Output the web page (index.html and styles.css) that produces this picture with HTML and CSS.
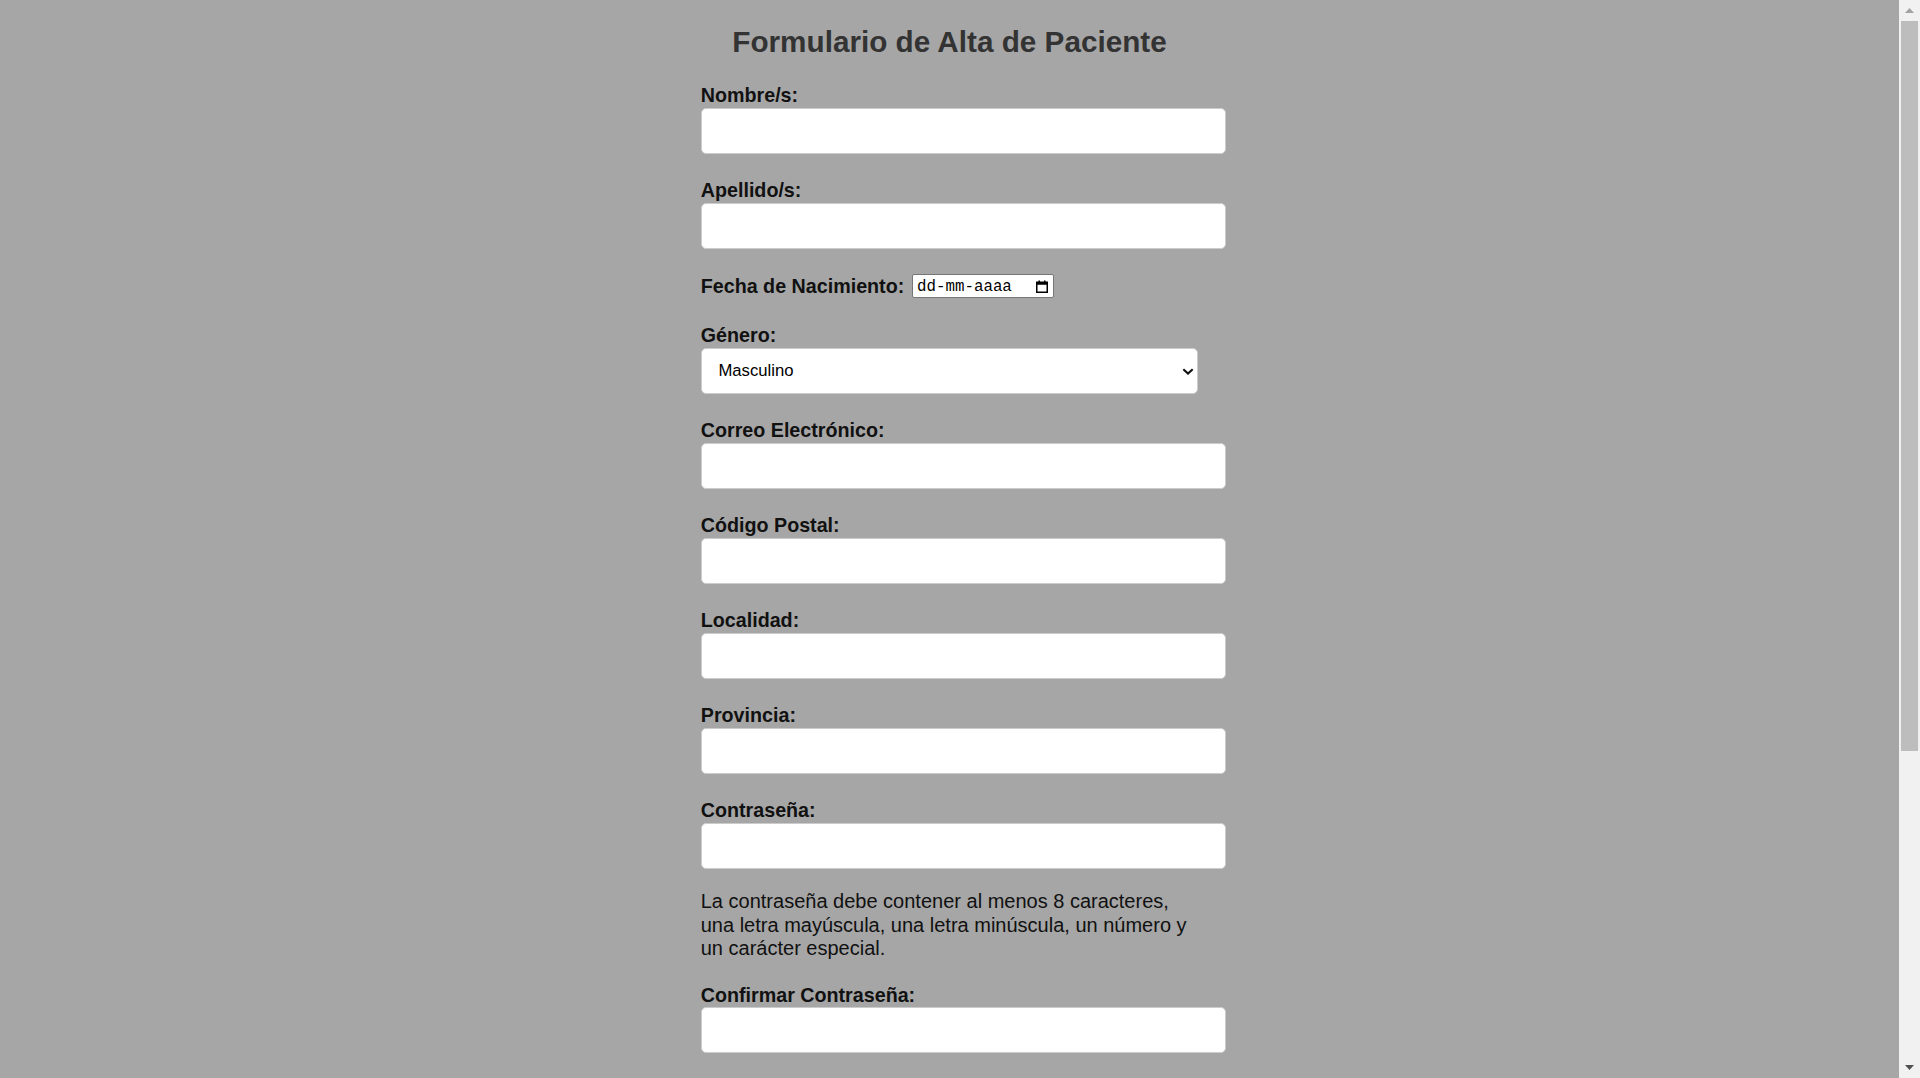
FILE: index.html
```html
<!DOCTYPE html>
<html lang="es">
<head>
<meta charset="utf-8">
<title>Formulario de Alta de Paciente</title>
<link rel="stylesheet" href="styles.css">
</head>
<body>
<div class="page">
  <main class="viewport">
    <form class="form">
      <h2 class="title">Formulario de Alta de Paciente</h2>

      <div class="field">
        <label class="label" for="nombre">Nombre/s:</label>
        <input class="text-input" id="nombre" type="text">
      </div>

      <div class="field">
        <label class="label" for="apellido">Apellido/s:</label>
        <input class="text-input" id="apellido" type="text">
      </div>

      <div class="field field--inline">
        <label class="label label--inline">Fecha de Nacimiento:</label>
        <div class="date-input">
          <span class="date-text">dd-mm-aaaa</span>
          <svg class="cal-icon" width="12" height="13" viewBox="0 0 12 13" aria-hidden="true">
            <rect x="0.75" y="2.25" width="10.5" height="10" fill="none" stroke="#000" stroke-width="1.5"/>
            <rect x="0.75" y="2.25" width="10.5" height="2.5" fill="#000"/>
            <rect x="2.5" y="0.5" width="1.5" height="2" fill="#000"/>
            <rect x="8" y="0.5" width="1.5" height="2" fill="#000"/>
          </svg>
        </div>
      </div>

      <div class="field">
        <label class="label" for="genero">Género:</label>
        <div class="select-wrap">
          <select class="select" id="genero">
            <option>Masculino</option>
            <option>Femenino</option>
            <option>Otro</option>
          </select>
          <svg class="chevron" width="12" height="7" viewBox="0 0 12 7" aria-hidden="true">
            <polyline points="1.3,1.3 6,5.6 10.7,1.3" fill="none" stroke="#111" stroke-width="2.1"/>
          </svg>
        </div>
      </div>

      <div class="field">
        <label class="label" for="correo">Correo Electrónico:</label>
        <input class="text-input" id="correo" type="text">
      </div>

      <div class="field">
        <label class="label" for="cp">Código Postal:</label>
        <input class="text-input" id="cp" type="text">
      </div>

      <div class="field">
        <label class="label" for="localidad">Localidad:</label>
        <input class="text-input" id="localidad" type="text">
      </div>

      <div class="field">
        <label class="label" for="provincia">Provincia:</label>
        <input class="text-input" id="provincia" type="text">
      </div>

      <div class="field field--tight">
        <label class="label" for="pass">Contraseña:</label>
        <input class="text-input" id="pass" type="password">
      </div>

      <p class="hint">La contraseña debe contener al menos 8 caracteres, una letra mayúscula, una letra minúscula, un número y un carácter especial.</p>

      <div class="field">
        <label class="label" for="pass2">Confirmar Contraseña:</label>
        <input class="text-input" id="pass2" type="password">
      </div>
    </form>
  </main>

  <div class="scrollbar" aria-hidden="true">
    <div class="sb-btn">
      <svg width="9" height="5" viewBox="0 0 9 5"><polygon points="4.5,0 9,5 0,5" fill="#a3a3a3"/></svg>
    </div>
    <div class="sb-thumb"></div>
    <div class="sb-track"></div>
    <div class="sb-btn">
      <svg width="9" height="5" viewBox="0 0 9 5"><polygon points="0,0 9,0 4.5,5" fill="#505050"/></svg>
    </div>
  </div>
</div>
</body>
</html>
```

FILE: styles.css
```css
* {
  box-sizing: border-box;
}

html,
body {
  margin: 0;
  padding: 0;
}

body {
  background: #a6a6a6;
  font-family: "Liberation Sans", Arial, sans-serif;
  overflow: hidden;
}

.page {
  display: flex;
  height: 1078px;
}

.viewport {
  flex: 1;
  min-width: 0;
  overflow: hidden;
}

.form {
  width: 497.5px;
  margin: 0 auto;
  display: flex;
  flex-direction: column;
}

.title {
  margin: 24.8px 0 25px;
  font-size: 29.7px;
  line-height: 34.5px;
  font-weight: bold;
  color: #333;
  text-align: center;
}

.field {
  display: flex;
  flex-direction: column;
  margin-bottom: 25.5px;
}

.field--tight {
  margin-bottom: 21.5px;
}

.field--inline {
  flex-direction: row;
  align-items: center;
  height: 26px;
  margin-top: -1.2px;
  margin-bottom: 25.2px;
}

.label {
  font-size: 19.7px;
  line-height: 23px;
  font-weight: bold;
  color: #111;
  margin-bottom: 0.5px;
}

.label--inline {
  margin-bottom: 0;
}

.text-input {
  display: block;
  width: 525px;
  height: 46px;
  margin: 0;
  padding: 0 12.5px;
  border: 1px solid #cccccc;
  border-radius: 5px;
  background: #fff;
  font-family: "Liberation Sans", Arial, sans-serif;
  font-size: 16.67px;
  outline: none;
}

.date-input {
  display: flex;
  align-items: center;
  justify-content: space-between;
  width: 142px;
  height: 24px;
  margin-left: 8px;
  padding: 0 5px 0 3.8px;
  border: 1px solid #767676;
  border-radius: 2px;
  background: #fff;
}

.date-text {
  font-family: "Liberation Mono", "DejaVu Sans Mono", monospace;
  font-size: 15.8px;
  line-height: 18px;
  color: #000;
  padding-top: 1px;
}

.cal-icon {
  display: block;
  flex-shrink: 0;
}

.select-wrap {
  position: relative;
  width: 100%;
}

.select {
  display: block;
  width: 100%;
  height: 46px;
  margin: 0;
  padding: 0 30px 0 16.7px;
  border: 1px solid #cccccc;
  border-radius: 5px;
  background: #fff;
  color: #000;
  font-family: "Liberation Sans", Arial, sans-serif;
  font-size: 16.67px;
  appearance: none;
  -webkit-appearance: none;
  outline: none;
}

.chevron {
  position: absolute;
  right: 4.5px;
  top: 20.6px;
  pointer-events: none;
}

.hint {
  margin: 0 0 24px;
  font-size: 20px;
  line-height: 23.2px;
  color: #111;
}

.scrollbar {
  width: 21px;
  flex-shrink: 0;
  background: #f1f1f1;
  display: flex;
  flex-direction: column;
}

.sb-btn {
  height: 21px;
  flex-shrink: 0;
  display: flex;
  align-items: center;
  justify-content: center;
}

.sb-btn svg {
  display: block;
}

.sb-thumb {
  height: 730px;
  margin: 0 2px;
  background: #bdbdbd;
  flex-shrink: 0;
}

.sb-track {
  flex: 1;
}
```
